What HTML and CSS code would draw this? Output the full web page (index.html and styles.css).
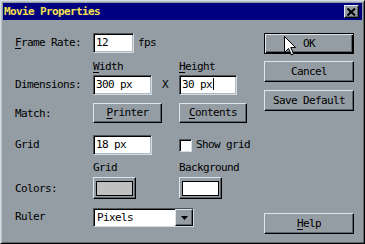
FILE: index.html
```html
<!DOCTYPE html>
<html lang="en">

<head>
    <meta charset="UTF-8">
    <title>Movie Properties</title>
    <link rel="stylesheet" href="styles.css">
</head>

<body>
    <div class="window">
        <div class="titlebar">
            <span class="title">Movie Properties</span>
            <div class="close">
                <svg width="9" height="8" viewBox="0 0 9 8">
                    <path d="M0.5 0.5 L8 7.5 M8 0.5 L0.5 7.5" stroke="#000" stroke-width="2" fill="none" />
                </svg>
            </div>
        </div>
        <div class="content">
            <div class="form">
                <div class="lbl m3"><u>F</u>rame Rate:</div>
                <div class="cell span2">
                    <div class="field w41">12</div>
                    <span class="unit">fps</span>
                </div>

                <div class="lbl"></div>
                <div class="lbl m2"><u>W</u>idth</div>
                <div class="lbl m2"><u>H</u>eight</div>

                <div class="lbl m3">Dimensions:</div>
                <div class="cell">
                    <div class="field w59">300 px</div>
                    <span class="times">X</span>
                </div>
                <div class="field w58">30 px<span class="caret"></span></div>

                <div class="lbl m2">Match:</div>
                <div class="btn w69"><u>P</u>rinter</div>
                <div class="btn w68"><u>C</u>ontents</div>

                <div class="lbl m3">Grid</div>
                <div class="field w59">18 px</div>
                <div class="cell check-row">
                    <div class="checkbox"></div>
                    <span>Show grid</span>
                </div>

                <div class="lbl"></div>
                <div class="lbl m2">Grid</div>
                <div class="lbl m2">Background</div>

                <div class="lbl m3">Colors:</div>
                <div class="btn swatch-btn"><div class="swatch grey"></div></div>
                <div class="btn swatch-btn"><div class="swatch white"></div></div>

                <div class="lbl m3">Ruler</div>
                <div class="select span2">
                    <span class="select-text">Pixels</span>
                    <div class="arrow">
                        <svg width="7" height="4" viewBox="0 0 7 4">
                            <path d="M0 0 H7 L3.5 4 Z" fill="#000" />
                        </svg>
                    </div>
                </div>
            </div>

            <div class="actions">
                <div class="btn wide default">OK</div>
                <div class="btn wide cancel">Cancel</div>
                <div class="btn wide save">Save Default</div>
                <div class="btn wide help"><u>H</u>elp</div>
            </div>
        </div>

        <!-- mouse pointer over the OK button -->
        <svg class="cursor" width="13" height="20" viewBox="0 0 13 20">
            <path d="M0.5 0.5 V16.5 L4.5 12.5 L7.5 19 L9.5 18 L6.8 11.5 H11.5 Z" fill="#fff" stroke="#000"
                stroke-width="1" />
        </svg>
    </div>
</body>

</html>
```

FILE: styles.css
```css
* {
    margin: 0;
    padding: 0;
    box-sizing: border-box;
}

body {
    font-family: 'DejaVu Sans Mono', 'Liberation Mono', monospace;
    font-size: 11px;
    line-height: 14px;
    letter-spacing: -0.62px;
    color: #000;
    background: #949ca4;
}

u {
    text-decoration: underline;
    text-underline-offset: 2px;
}

.window {
    position: relative;
    width: 365px;
    height: 244px;
    background: #949ca4;
    border: 1px solid;
    border-color: #d4dce4 #000 #000 #d4dce4;
    box-shadow: inset 1px 1px #b8c0c8, inset -1px -1px #5c646c;
    padding: 2px;
    display: flex;
    flex-direction: column;
}

.titlebar {
    height: 17px;
    background: #000080;
    display: flex;
    align-items: center;
    justify-content: space-between;
    padding: 0 3px 0 1px;
}

.title {
    color: #f4e050;
    font-weight: bold;
}

.close {
    width: 15px;
    height: 13px;
    background: #949ca4;
    border: 1px solid;
    border-color: #e4eaf0 #000 #000 #e4eaf0;
    box-shadow: inset -1px -1px #5c646c;
    display: flex;
    align-items: center;
    justify-content: center;
}

.close svg {
    display: block;
}

.content {
    flex: 1;
    display: flex;
}

.form {
    margin-left: 12px;
    padding-top: 13px;
    display: grid;
    grid-template-columns: 78px 86px auto;
    grid-template-rows: 20px 23px 19px 28px 32px 22px 22px 28px;
    align-items: end;
}

.lbl {
    height: 14px;
    white-space: nowrap;
}

.m2 {
    margin-bottom: 2px;
}

.m3 {
    margin-bottom: 3px;
}

.cell {
    display: flex;
    align-items: center;
}

.span2 {
    grid-column: span 2;
}

.field {
    height: 20px;
    background: #fff;
    border: 1px solid;
    border-color: #4c545c #d4dce4 #d4dce4 #4c545c;
    box-shadow: inset 1px 1px #000, inset -1px -1px #b0b8c0;
    padding: 2px 0 0 2px;
    white-space: nowrap;
}

.w41 {
    width: 41px;
}

.w58 {
    width: 58px;
}

.w59 {
    width: 59px;
}

.w68 {
    width: 68px;
}

.w69 {
    width: 69px;
}

.unit {
    margin-left: 4px;
}

.times {
    margin-left: 10px;
}

.caret {
    display: inline-block;
    width: 1px;
    height: 12px;
    background: #000;
    vertical-align: -2px;
    margin-left: 1px;
}

.btn {
    height: 20px;
    background: #949ca4;
    border: 1px solid;
    border-color: #dce4ec #000 #000 #dce4ec;
    box-shadow: inset -1px -1px #5c646c;
    display: flex;
    align-items: center;
    justify-content: center;
    white-space: nowrap;
}

.check-row {
    margin-bottom: 3px;
}

.checkbox {
    width: 13px;
    height: 13px;
    background: #fff;
    border: 1px solid;
    border-color: #4c545c #d4dce4 #d4dce4 #4c545c;
    box-shadow: inset 1px 1px #000;
    margin-right: 4px;
}

.swatch-btn {
    width: 43px;
    height: 22px;
}

.swatch {
    width: 37px;
    height: 15px;
    border: 1px solid #000;
}

.grey {
    background: #c0c0c0;
}

.white {
    background: #fff;
}

.select {
    width: 101px;
    height: 19px;
    background: #fff;
    border: 1px solid;
    border-color: #4c545c #d4dce4 #d4dce4 #4c545c;
    box-shadow: inset 1px 1px #000;
    display: flex;
    align-items: stretch;
}

.select-text {
    flex: 1;
    padding: 2px 0 0 3px;
}

.arrow {
    width: 18px;
    background: #949ca4;
    border: 1px solid;
    border-color: #dce4ec #000 #000 #dce4ec;
    box-shadow: inset -1px -1px #5c646c;
    display: flex;
    align-items: center;
    justify-content: center;
}

.arrow svg {
    display: block;
}

.actions {
    margin-left: auto;
    margin-right: 8px;
    padding: 13px 0 7px;
    display: flex;
    flex-direction: column;
}

.wide {
    width: 90px;
    height: 21px;
}

.default {
    border-color: #000;
    box-shadow: inset 1px 1px #dce4ec, inset -1px -1px #000, inset -2px -2px #5c646c;
}

.cancel {
    margin-top: 7px;
}

.save {
    margin-top: 8px;
}

.help {
    margin-top: auto;
}

.cursor {
    position: absolute;
    left: 283px;
    top: 35px;
}
```
